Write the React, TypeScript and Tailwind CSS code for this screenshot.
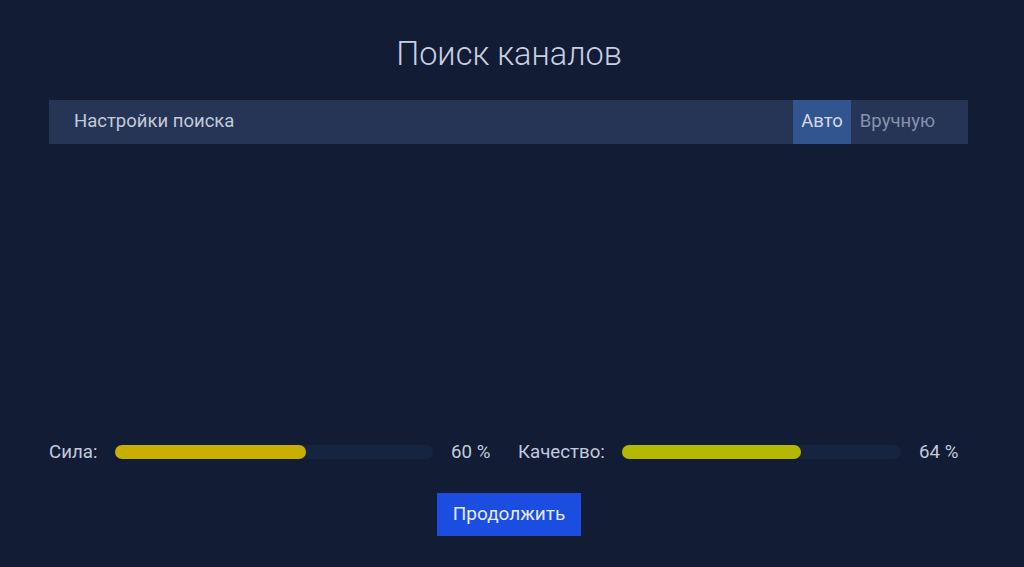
const FONT = { fontFamily: 'Roboto, "Noto Sans", sans-serif' };

function Meter({ label, value, fill, labelW, trackW }: { label: string; value: number; fill: string; labelW: string; trackW: string }) {
  return (
    <div className="flex items-center">
      <span className={`${labelW} text-[18.7px] text-[#c3cadb]`}>{label}</span>
      <div className={`h-[14px] ${trackW} rounded-full bg-[#172440]`}>
        <div className={`h-full rounded-full ${fill}`} style={{ width: `${value}%` }} />
      </div>
      <span className="ml-[18px] w-[38px] whitespace-nowrap text-[18.7px] text-[#c3cadb]">{value} %</span>
    </div>
  );
}

export default function App() {
  return (
    <div className="flex h-[567px] w-[1024px] flex-col bg-[#121c35]" style={FONT}>
      <h1 className="mt-[34px] pr-[6px] text-center text-[32.5px] font-light leading-[40px] text-[#c8cfe0]">Поиск каналов</h1>

      <div className="ml-[49px] mr-[56px] mt-[26px] flex h-[44px] items-center bg-[#263555]">
        <span className="ml-[25px] flex-1 text-[18.5px] text-[#c3cadb]">Настройки поиска</span>
        <div className="flex h-full items-center bg-[#33558f] px-[8px] text-[18.5px] text-[#d4daea]">Авто</div>
        <div className="flex h-full items-center pl-[9px] pr-[33px] text-[18.5px] text-[#8792ad]">Вручную</div>
      </div>

      <div className="flex-1" />

      <div className="mx-[49px] flex items-center gap-[29px]">
        <Meter label="Сила:" value={60} fill="bg-[#c9b000]" labelW="w-[66px]" trackW="w-[318px]" />
        <Meter label="Качество:" value={64} fill="bg-[#b5b800]" labelW="w-[104px]" trackW="w-[279px]" />
      </div>

      <div className="mb-[31px] mt-[27px] flex justify-center pr-[6px]">
        <button className="h-[43px] w-[144px] bg-[#1a4de0] text-[19px] text-[#e6ebf8]">Продолжить</button>
      </div>
    </div>
  );
}
